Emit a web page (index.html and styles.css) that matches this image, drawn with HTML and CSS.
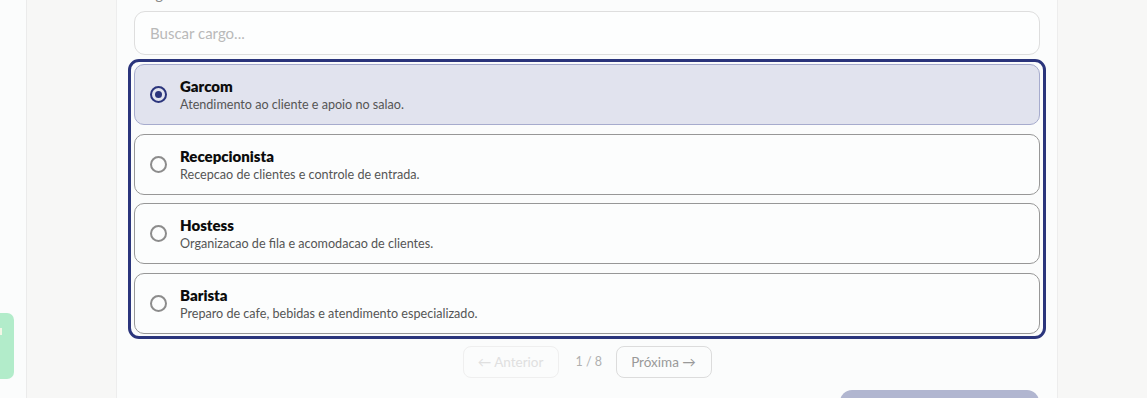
FILE: index.html
```html
<!DOCTYPE html>
<html lang="pt-BR">
<head>
<meta charset="utf-8">
<title>Cargo</title>
<link rel="stylesheet" href="styles.css">
</head>
<body>
<div class="app">
  <aside class="rail">
    <div class="fab"><span class="fab-mark"></span></div>
  </aside>
  <main class="stage">
    <section class="card">
      <label class="field-label">Cargo</label>
      <input class="search" type="text" placeholder="Buscar cargo...">
      <div class="options">
        <div class="option selected">
          <span class="radio"><span class="dot"></span></span>
          <div class="opt-text">
            <div class="opt-title">Garcom</div>
            <div class="opt-desc">Atendimento ao cliente e apoio no salao.</div>
          </div>
        </div>
        <div class="option">
          <span class="radio"></span>
          <div class="opt-text">
            <div class="opt-title">Recepcionista</div>
            <div class="opt-desc">Recepcao de clientes e controle de entrada.</div>
          </div>
        </div>
        <div class="option">
          <span class="radio"></span>
          <div class="opt-text">
            <div class="opt-title">Hostess</div>
            <div class="opt-desc">Organizacao de fila e acomodacao de clientes.</div>
          </div>
        </div>
        <div class="option">
          <span class="radio"></span>
          <div class="opt-text">
            <div class="opt-title">Barista</div>
            <div class="opt-desc">Preparo de cafe, bebidas e atendimento especializado.</div>
          </div>
        </div>
      </div>
      <div class="pager">
        <button class="pg-btn disabled">← Anterior</button>
        <span class="pg-count">1 / 8</span>
        <button class="pg-btn">Próxima →</button>
      </div>
      <div class="actions">
        <button class="primary" aria-label="Continuar"></button>
      </div>
    </section>
  </main>
</div>
</body>
</html>
```
FILE: styles.css
```css
* { box-sizing: border-box; }
html, body { margin: 0; padding: 0; height: 100%; overflow: hidden; }
body {
  font-family: "Lato", "Noto Sans", sans-serif;
  background: #fafbfb;
  color: #111;
}
.app { display: flex; height: 398px; overflow: hidden; }
.rail {
  width: 27px;
  flex: none;
  background: #fbfcfc;
  border-right: 1px solid #ebebeb;
  display: flex;
  flex-direction: column;
  padding-top: 313px;
}
.fab {
  width: 14px;
  height: 66px;
  background: #b2ecca;
  border-radius: 0 7px 7px 0;
  padding-top: 15px;
  flex: none;
}
.fab-mark { display: block; width: 2px; height: 7px; background: #f3f6e6; }
.stage {
  flex: 1;
  background: #f7f7f6;
  display: flex;
  justify-content: center;
  align-items: flex-start;
}
.card {
  width: 942px;
  flex: none;
  background: #fbfcfc;
  border-left: 1px solid #ededed;
  border-right: 1px solid #ededed;
  padding: 0 17px 20px;
  margin-top: -14px;
  min-height: 430px;
  display: flex;
  flex-direction: column;
}
.card > * { flex: none; }
.field-label {
  display: block;
  font-size: 14px;
  font-weight: 600;
  color: #888;
  height: 25px;
  line-height: 18px;
}
.search {
  height: 44px;
  width: 100%;
  border: 1px solid #dedede;
  border-radius: 11px;
  background: #fdfefe;
  padding: 0 15px;
  font-family: inherit;
  font-size: 15px;
  color: #333;
  outline: none;
}
.search::placeholder { color: #b9b9b9; }
.options {
  margin: 4px -6px 0;
  border: 3px solid #2b357c;
  border-radius: 11px;
  padding: 2px 3px;
  display: flex;
  flex-direction: column;
  gap: 8.5px;
}
.option {
  height: 61px;
  flex: none;
  border: 1px solid #979797;
  border-radius: 10px;
  background: #fcfdfd;
  display: flex;
  align-items: center;
  padding-left: 15px;
  gap: 13px;
}
.option.selected {
  background: #e1e3ee;
  border-color: #a6abcd;
}
.radio {
  width: 17px;
  height: 17px;
  border: 2px solid #8c8c8c;
  border-radius: 50%;
  flex: none;
  display: flex;
  align-items: center;
  justify-content: center;
}
.selected .radio { border-color: #2b357c; }
.dot { width: 7px; height: 7px; border-radius: 50%; background: #2b357c; }
.opt-text { display: flex; flex-direction: column; gap: 2px; padding-top: 1px; }
.opt-title { font-size: 15px; font-weight: 800; color: #0c0c0c; line-height: 18px; }
.opt-desc { font-size: 12.6px; color: #555; line-height: 16px; }
.pager {
  margin-top: 7px;
  display: flex;
  justify-content: center;
  align-items: center;
  gap: 17px;
}
.pg-btn {
  height: 32px;
  width: 96px;
  border: 1px solid #dcdcdc;
  border-radius: 8px;
  background: transparent;
  font-family: inherit;
  font-size: 13.5px;
  color: #999;
  padding: 0;
}
.pg-btn.disabled { border-color: #efefef; color: #e0e0e0; }
.pg-count { font-size: 12.5px; color: #b0b0b0; width: 23px; text-align: center; white-space: nowrap; }
.actions {
  margin-top: 12px;
  display: flex;
  justify-content: flex-end;
  padding-right: 1px;
}
.primary {
  width: 199px;
  height: 44px;
  border: none;
  border-radius: 12px;
  background: #b1b6d0;
  color: #fff;
  font-family: inherit;
  font-size: 15px;
  font-weight: 700;
}
```
